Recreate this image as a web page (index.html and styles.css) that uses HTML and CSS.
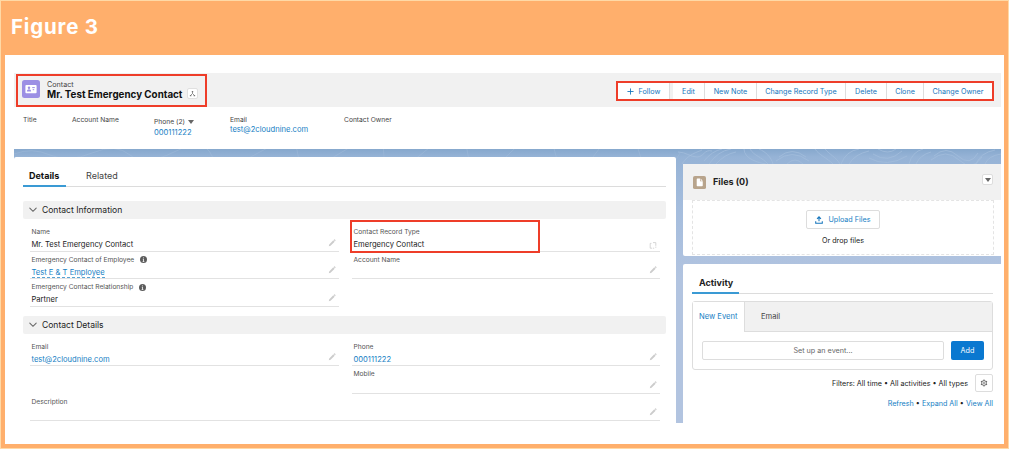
FILE: index.html
```html
<!DOCTYPE html>
<html lang="en">
<head>
  <meta charset="UTF-8">
  <title>Figure 3</title>
  <link rel="stylesheet" href="styles.css">
</head>
<body>
  <svg class="defs" width="0" height="0">
    <symbol id="pencil" viewBox="0 0 10 10">
      <path d="M1 9l.5-2.2L6.6 1.7l1.7 1.7-5.1 5.1zM7.1 1.2l.6-.6c.3-.3.6-.2.9.1l.7.7c.3.3.3.6 0 .9l-.6.6z"/>
    </symbol>
    <symbol id="info" viewBox="0 0 10 10">
      <circle cx="5" cy="5" r="5" fill="#5c5c5c"/>
      <path d="M5 2v1.3M5 4.4V8M4 4.6h1M3.8 7.8h2.4" stroke="#fff" stroke-width="1.1"/>
    </symbol>
    <symbol id="chevron" viewBox="0 0 10 7">
      <path d="M1 1.2l4 4 4-4" fill="none" stroke="#666" stroke-width="1.3" stroke-linecap="round"/>
    </symbol>
  </svg>

  <div class="figure">
    <h1 class="figure-title">Figure 3</h1>
    <div class="paper">
      <div class="app">

        <div class="record-header">
          <div class="record-name">
            <svg class="contact-icon" viewBox="0 0 18 18">
              <rect width="18" height="18" rx="2.5" fill="#9c8fe4"/>
              <rect x="3.4" y="5" width="11.2" height="8.2" rx="1" fill="#fff"/>
              <circle cx="7" cy="7.7" r="1.2" fill="#9c8fe4"/>
              <path d="M4.9 11.4c0-1.5 1-2.2 2.1-2.2s2.1.7 2.1 2.2z" fill="#9c8fe4"/>
              <path d="M10.2 7.6h2.6M10.7 9.7h1.5" stroke="#9c8fe4"/>
            </svg>
            <div class="record-text">
              <div class="record-type">Contact</div>
              <div class="record-title">Mr. Test Emergency Contact</div>
            </div>
            <div class="hierarchy">
              <svg viewBox="0 0 8 8"><path d="M4 2v2L2 6M4 4l2 2" fill="none" stroke="#777" stroke-width=".9"/><path d="M3.2 1h1.6v1.6H3.2zM1 5.6h1.7v1.6H1zM5.3 5.6H7v1.6H5.3z" fill="#777"/></svg>
            </div>
          </div>
          <div class="actions">
            <div class="action follow"><svg viewBox="0 0 8 8"><path d="M4 .5v7M.5 4h7" stroke="#1676bd" stroke-width="1"/></svg>Follow</div>
            <div class="action edit">Edit</div>
            <div class="action note">New Note</div>
            <div class="action change-type">Change Record Type</div>
            <div class="action delete">Delete</div>
            <div class="action clone">Clone</div>
            <div class="action owner">Change Owner</div>
          </div>
        </div>

        <div class="highlights">
          <div class="highlight">Title</div>
          <div class="highlight">Account Name</div>
          <div class="highlight phone">
            <span>Phone (2) <i class="caret"></i></span>
            <a>000111222</a>
          </div>
          <div class="highlight">
            <span>Email</span>
            <a>test@2cloudnine.com</a>
          </div>
          <div class="highlight">Contact Owner</div>
        </div>

        <div class="workspace">
          <svg class="contours" viewBox="0 0 987 15" fill="none" stroke="#a5bedc" stroke-width=".7">
            <path d="M0 5q18-7 36 1t42-2 38 2 44-3 38 4 46-3 40 2 44-3 42 4 40-4 44 3 42-2 46 3 40-3 44 2 40-2" opacity=".6"/>
            <path d="M664 3c8 0 12 5 19 5s7-8 15-6M668 15c6-10 16-12 20-14M690 12q8-10 18-12M695 15q9-13 22-15M702 15q9-10 20-12M730 0c0 10 15 14 22 15M736 0c4 7 12 8 18 15M745 0c7 3 12 8 14 15M765 8q13-11 27 0M762 12q16-13 33 0M773 15q8-8 16 0M801 0c4 6 12 9 18 15M811 0c5 6 11 8 15 15M827 15q5-13 18-15M835 15q6-10 20-13M859 5q15 10 29-3M864 0q10 6 18 0M855 9q18 10 38-2M895 15q3-12 14-15M902 15q4-9 15-12M920 7q12-11 24 0t20-3M917 11q15-12 28 0t23-3M962 15q4-11 19-14M971 15q3-8 16-10"/>
          </svg>

          <div class="details-card">
            <div class="tabs">
              <div class="tab active">Details</div>
              <div class="tab">Related</div>
            </div>

            <div class="section-head"><svg><use href="#chevron"/></svg>Contact Information</div>
            <div class="fields">
              <div class="field">
                <div class="label">Name</div>
                <div class="value">Mr. Test Emergency Contact</div>
                <svg class="pen"><use href="#pencil"/></svg>
              </div>
              <div class="field">
                <div class="label">Contact Record Type</div>
                <div class="value">Emergency Contact</div>
                <svg class="pen switch" viewBox="0 0 10 10"><path d="M3 3H1.5v6H4M5 9h1.5M5 2h3.5v4M8.5 7v1.5"/></svg>
                <div class="callout"></div>
              </div>
              <div class="field">
                <div class="label">Emergency Contact of Employee <svg class="info"><use href="#info"/></svg></div>
                <div class="value"><a class="lookup">Test E &amp; T Employee</a></div>
                <svg class="pen"><use href="#pencil"/></svg>
              </div>
              <div class="field">
                <div class="label">Account Name</div>
                <svg class="pen"><use href="#pencil"/></svg>
              </div>
              <div class="field">
                <div class="label">Emergency Contact Relationship <svg class="info"><use href="#info"/></svg></div>
                <div class="value">Partner</div>
                <svg class="pen"><use href="#pencil"/></svg>
              </div>
            </div>

            <div class="section-head"><svg><use href="#chevron"/></svg>Contact Details</div>
            <div class="fields">
              <div class="field">
                <div class="label">Email</div>
                <div class="value"><a>test@2cloudnine.com</a></div>
                <svg class="pen"><use href="#pencil"/></svg>
              </div>
              <div class="field">
                <div class="label">Phone</div>
                <div class="value"><a>000111222</a></div>
                <svg class="pen"><use href="#pencil"/></svg>
              </div>
              <div class="field second">
                <div class="label">Mobile</div>
                <svg class="pen"><use href="#pencil"/></svg>
              </div>
              <div class="field wide">
                <div class="label">Description</div>
                <svg class="pen"><use href="#pencil"/></svg>
              </div>
            </div>
          </div>

          <div class="side">
            <div class="files-card">
              <div class="files-head">
                <svg class="files-icon" viewBox="0 0 14 14">
                  <rect width="14" height="14" rx="2" fill="#b8a48c"/>
                  <path d="M4 3.5c0-.5.3-.8.8-.8h2.7v3h3v4.6c0 .5-.3.8-.8.8H4.8c-.5 0-.8-.3-.8-.8z" fill="#fff"/>
                  <path d="M8.2 2.8l2.3 2.4H8.2z" fill="#fff"/>
                </svg>
                <div class="files-title">Files (0)</div>
                <div class="menu"><i class="caret"></i></div>
              </div>
              <div class="dropzone">
                <div class="upload"><svg viewBox="0 0 9 9"><path d="M4.5 6V1M2.3 3.2l2.2-2.3 2.2 2.3M.8 5.8v2.4h7.4V5.8" fill="none" stroke="#1676bd" stroke-width="1.2"/></svg>Upload Files</div>
                <div class="drop-text">Or drop files</div>
              </div>
            </div>

            <div class="activity-card">
              <div class="activity-tabs"><div class="activity-tab">Activity</div></div>
              <div class="composer">
                <div class="composer-tabs">
                  <div class="composer-tab active">New Event</div>
                  <div class="composer-tab">Email</div>
                </div>
                <div class="composer-body">
                  <div class="event-input">Set up an event...</div>
                  <div class="add">Add</div>
                </div>
              </div>
              <div class="filters">
                <span>Filters: All time • All activities • All types</span>
                <div class="gear">
                  <svg viewBox="0 0 10 10" fill="none" stroke="#666"><circle cx="5" cy="5" r="3" stroke-width="1.1"/><circle cx="5" cy="5" r="1" stroke-width=".8"/><path d="M5 .6v1.6M5 7.8v1.6M1.2 2.8l1.4.8M7.4 6.4l1.4.8M1.2 7.2l1.4-.8M7.4 3.6l1.4-.8" stroke-width="1.3"/></svg>
                </div>
              </div>
              <div class="links"><a>Refresh</a> • <a>Expand All</a> • <a>View All</a></div>
            </div>
          </div>
        </div>

      </div>
    </div>
  </div>
</body>
</html>
```
FILE: styles.css
```css
* {
  box-sizing: border-box;
}

body {
  margin: 0;
  font-family: Inter, "Liberation Sans", sans-serif;
  font-size: 7.2px;
  color: #222;
}

a {
  color: #1680c4;
}

.defs {
  position: absolute;
}

.figure {
  width: 1009px;
  height: 449px;
  padding: 0 4px 4px;
  background: #ffaf6c;
  border: 1px solid #ffd9a6;
}

.figure-title {
  height: 54px;
  margin: 0;
  padding: 13px 0 0 6px;
  font-size: 20.5px;
  line-height: 26px;
  font-weight: 700;
  letter-spacing: 0.8px;
  color: #fff;
}

.paper {
  height: 389px;
  padding: 18px 3px 0 9px;
  background: #fff;
}

.app {
  height: 350px;
  overflow: hidden;
}

/* record header */

.record-header {
  display: flex;
  justify-content: space-between;
  height: 34px;
  padding: 1px 7px 0 2px;
  background: #f1f1f1;
}

.record-name {
  display: flex;
  width: 191px;
  height: 33px;
  padding: 4px 0 0 4px;
  border: 2px solid #ee3d29;
}

.contact-icon {
  width: 18px;
  height: 18px;
}

.record-text {
  margin-left: 7px;
  white-space: nowrap;
}

.record-type {
  height: 8px;
  line-height: 9px;
  color: #444;
}

.record-title {
  font-size: 9.82px;
  line-height: 13px;
  font-weight: 700;
  color: #111;
}

.hierarchy {
  display: flex;
  width: 11px;
  height: 11px;
  margin: 8px 0 0 5px;
  padding: 1px;
  background: #fff;
  border: 1px solid #e0e0e0;
  border-radius: 2px;
}

.actions {
  display: flex;
  width: 378px;
  height: 20px;
  margin-top: 7px;
  border: 2px solid #ee3d29;
}

.action {
  display: flex;
  align-items: center;
  justify-content: center;
  white-space: nowrap;
  color: #1676bd;
  background: #fff;
  border-right: 1px solid #ddd;
}

.follow {
  width: 52px;
  margin-right: 3px;
}

.follow svg {
  width: 7px;
  height: 7px;
  margin-right: 5px;
}

.edit {
  width: 32px;
}

.note {
  width: 52px;
}

.change-type {
  width: 89px;
}

.delete {
  width: 41px;
}

.clone {
  width: 37px;
}

.owner {
  flex: 1;
  border-right: 0;
}

/* highlights */

.highlights {
  display: grid;
  grid-template-columns: 49px 82px 76px 114px 1fr;
  height: 42px;
  padding: 8px 0 0 9px;
  font-size: 6.7px;
  color: #444;
}

.highlight {
  line-height: 10px;
}

.highlight span,
.highlight a {
  display: block;
}

.highlight a {
  font-size: 7.6px;
}

.phone {
  padding-top: 2px;
}

.phone a {
  margin-top: 1px;
}

.phone .caret {
  margin-left: 1px;
}

.caret {
  display: inline-block;
  border: 3px solid transparent;
  border-top: 4px solid #666;
  border-bottom: 0;
}

/* workspace */

.workspace {
  position: relative;
  display: flex;
  height: 274px;
  background: linear-gradient(#86a8cd 0, #96b3d6 8px, #a5bddd 60px, #b2c4e0 130px);
}

.contours {
  position: absolute;
  top: 0;
  left: 0;
  width: 987px;
  height: 15px;
}

.details-card {
  position: relative;
  width: 662px;
  margin: 8px 7px 0 0;
  padding: 9px 10px 0 9px;
  background: #fff;
  border-radius: 2px 2px 0 0;
}

.tabs {
  display: flex;
  height: 21px;
  margin-bottom: 14px;
  border-bottom: 1px solid #dcdcdc;
}

.tab {
  height: 21px;
  padding: 0 6px;
  font-size: 9px;
  line-height: 19px;
  color: #444;
}

.tab.active {
  width: 43px;
  margin-right: 14px;
  font-weight: 700;
  color: #111;
  border-bottom: 2px solid #3a9ad4;
}

.section-head {
  display: flex;
  align-items: center;
  height: 18px;
  padding-left: 6px;
  font-size: 8.55px;
  background: #f1f1f1;
  border-radius: 2px;
}

.section-head svg {
  width: 8px;
  height: 6px;
  margin-right: 5px;
}

.fields {
  display: grid;
  grid-template-columns: 309px 308px;
  column-gap: 13px;
  padding: 5px 0 9px 7px;
}

.field {
  position: relative;
  height: 27.5px;
  padding: 3px 1.5px 0;
  border-bottom: 1px solid #e2e2e2;
}

.field.second {
  grid-column: 2;
}

.field.wide {
  grid-column: 1 / 3;
}

.label {
  height: 10px;
  font-size: 6.65px;
  line-height: 10px;
  color: #555;
}

.value {
  margin-top: 1px;
  font-size: 7.6px;
  line-height: 13px;
}

.lookup {
  border-bottom: 1px dashed #56a3d4;
}

.info {
  width: 7px;
  height: 7px;
  margin-left: 4px;
  vertical-align: -1.5px;
}

.pen {
  position: absolute;
  right: 3px;
  bottom: 4px;
  width: 8px;
  height: 8px;
  fill: #ccc;
}

.switch {
  bottom: 2px;
  fill: none;
  stroke: #ccc;
}

.callout {
  position: absolute;
  top: -4px;
  left: -2px;
  width: 190px;
  height: 33px;
  border: 2px solid #ee3d29;
}

/* side column */

.side {
  position: relative;
  flex: 1;
  padding-top: 15px;
}

.files-card {
  height: 92px;
  margin-bottom: 8px;
  background: #fff;
  border-radius: 2px 0 0 2px;
}

.files-head {
  display: flex;
  height: 36px;
  padding: 12px 8px 0 10px;
  background: #f1f1f1;
}

.files-icon {
  width: 13px;
  height: 13px;
}

.files-title {
  flex: 1;
  margin-left: 7px;
  font-size: 9px;
  line-height: 12px;
  font-weight: 700;
}

.menu {
  display: flex;
  align-items: center;
  justify-content: center;
  width: 11px;
  height: 11px;
  margin-top: -2px;
  background: #fff;
  border: 1px solid #ddd;
  border-radius: 2px;
}

.dropzone {
  display: flex;
  flex-direction: column;
  align-items: center;
  width: 302px;
  height: 55px;
  margin-left: 9px;
  padding-top: 9px;
  border: 1px dashed #e4e4e4;
}

.upload {
  display: flex;
  align-items: center;
  justify-content: center;
  width: 74px;
  height: 19px;
  font-size: 7.2px;
  color: #1680c4;
  border: 1px solid #ddd;
  border-radius: 2px;
}

.upload svg {
  width: 8px;
  height: 8px;
  margin-right: 5px;
}

.drop-text {
  margin-top: 6px;
  line-height: 12px;
}

.activity-card {
  height: 159px;
  padding: 9px 8px 0 9px;
  background: #fff;
  border-radius: 2px 0 0 0;
}

.activity-tabs {
  height: 21px;
  margin-bottom: 7px;
  border-bottom: 1px solid #dcdcdc;
}

.activity-tab {
  width: 47px;
  height: 21px;
  padding-left: 7px;
  font-size: 9px;
  line-height: 19px;
  font-weight: 700;
  border-bottom: 2px solid #3a9ad4;
}

.composer {
  height: 69px;
  border: 1px solid #ddd;
  border-radius: 3px;
}

.composer-tabs {
  display: flex;
  height: 30px;
  background: #f1f1f1;
  border-bottom: 1px solid #ddd;
}

.composer-tab {
  height: 30px;
  padding-left: 16px;
  font-size: 7.6px;
  line-height: 29px;
  color: #444;
}

.composer-tab.active {
  width: 52px;
  padding-left: 6px;
  white-space: nowrap;
  color: #1680c4;
  background: #fff;
  border-right: 1px solid #ddd;
}

.composer-body {
  display: flex;
  gap: 7px;
  padding: 9px 8px 0 9px;
}

.event-input {
  flex: 1;
  height: 19px;
  line-height: 17px;
  text-align: center;
  color: #666;
  border: 1px solid #ddd;
  border-radius: 2px;
}

.add {
  width: 33px;
  height: 19px;
  line-height: 19px;
  text-align: center;
  color: #fff;
  background: #0a78d0;
  border-radius: 2px;
}

.filters {
  display: flex;
  align-items: center;
  justify-content: flex-end;
  height: 18px;
  margin-top: 4px;
}

.gear {
  display: flex;
  align-items: center;
  justify-content: center;
  width: 18px;
  height: 18px;
  margin-left: 7px;
  border: 1px solid #ddd;
  border-radius: 2px;
}

.gear svg {
  width: 8px;
  height: 8px;
}

.links {
  margin-top: 6px;
  line-height: 11px;
  text-align: right;
}
```
